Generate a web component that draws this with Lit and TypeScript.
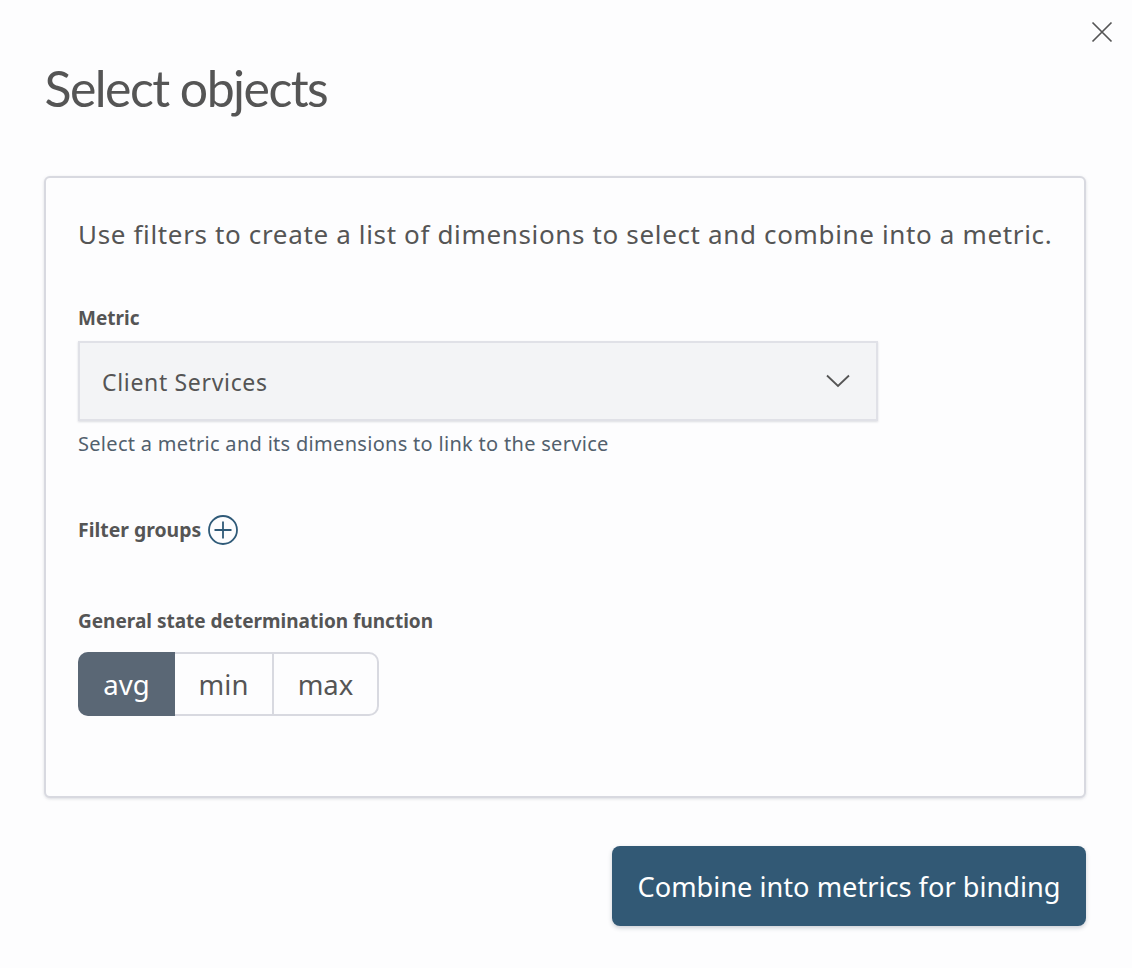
import { LitElement, html, css } from "lit";
import { customElement } from "lit/decorators.js";

@customElement("app-root")
export class AppRoot extends LitElement {
  static styles = css`
    :host {
      display: block;
      width: 1132px;
      height: 968px;
      background: #fdfdfe;
      font-family: "Noto Sans", "Open Sans", sans-serif;
      color: #555;
      overflow: hidden;
    }
    .dialog {
      position: relative;
      box-sizing: border-box;
      height: 968px;
      padding: 56px 46px 0 44px;
      display: flex;
      flex-direction: column;
    }
    .close {
      position: absolute;
      left: 1091px;
      top: 21px;
      width: 22px;
      height: 22px;
    }
    h1 {
      margin: 0 0 0 0.5px;
      font-family: "Lato", sans-serif;
      font-weight: 400;
      font-size: 50px;
      line-height: 64px;
      letter-spacing: -1.55px;
      color: #555;
      height: 120px;
    }
    .card {
      box-sizing: border-box;
      height: 622px;
      border: 2px solid #d8d9e0;
      border-radius: 6px;
      padding: 35px 32px 0;
      background: #fdfdfe;
      box-shadow: 0 1px 3px rgba(120, 125, 140, 0.25);
      display: flex;
      flex-direction: column;
      align-items: flex-start;
    }
    .intro {
      font-size: 26px;
      line-height: 42px;
      letter-spacing: 0.65px;
      white-space: nowrap;
    }
    .label {
      font-weight: 700;
      font-size: 19px;
      line-height: 28px;
      color: #555;
      white-space: nowrap;
    }
    .metric-label {
      margin-top: 49px;
    }
    .select {
      margin-top: 9px;
      box-sizing: border-box;
      width: 800px;
      height: 80px;
      border: 2px solid #e0e1e7;
      background: #f3f4f6;
      box-shadow: 0 1px 2px rgba(120, 125, 140, 0.25);
      padding: 1px 26px 0 22px;
      display: flex;
      align-items: center;
      justify-content: space-between;
      font-size: 23px;
      letter-spacing: 0.67px;
      color: #555;
    }
    .chevron {
      margin-top: -2px;
    }
    .hint {
      margin-top: 8px;
      font-size: 20px;
      line-height: 30px;
      letter-spacing: 0.3px;
      color: #52606d;
      white-space: nowrap;
    }
    .filters {
      margin-top: 55px;
      display: flex;
      align-items: center;
      gap: 7px;
      height: 32px;
    }
    .filters .label {
      font-size: 19.4px;
    }
    .func-label {
      margin-top: 61px;
    }
    .segments {
      margin-top: 17px;
      display: flex;
      height: 64px;
      box-sizing: border-box;
      border: 2px solid #d8d9e0;
      border-radius: 10px;
      font-size: 27.5px;
    }
    .seg {
      display: flex;
      align-items: center;
      justify-content: center;
      box-sizing: border-box;
    }
    .seg.on {
      background: #5a6775;
      color: #fff;
      width: 97px;
      margin: -2px 0 -2px -2px;
      border-radius: 10px 0 0 10px;
    }
    .seg.mid {
      width: 99px;
      border-right: 2px solid #d8d9e0;
    }
    .seg.last {
      width: 103px;
    }
    .footer {
      margin-top: 48px;
      display: flex;
      justify-content: flex-end;
    }
    button {
      box-sizing: border-box;
      width: 474px;
      height: 80px;
      border: none;
      border-radius: 8px;
      background: #325975;
      color: #fff;
      font-family: "Noto Sans", sans-serif;
      font-size: 27.2px;
      box-shadow: 0 2px 4px rgba(60, 70, 90, 0.25);
    }
    svg { display: block; }
  `;

  render() {
    return html`
      <div class="dialog">
        <svg class="close" viewBox="0 0 22 22" fill="none" stroke="#555" stroke-width="1.7">
          <path d="M1.5 1.5 L20.5 20.5 M20.5 1.5 L1.5 20.5" />
        </svg>
        <h1>Select objects</h1>
        <section class="card">
          <div class="intro">Use filters to create a list of dimensions to select and combine into a metric.</div>
          <div class="label metric-label">Metric</div>
          <div class="select">
            <span>Client Services</span>
            <svg class="chevron" width="24" height="14" viewBox="0 0 24 14" fill="none" stroke="#555" stroke-width="1.8">
              <path d="M1 1.5 L12 12 L23 1.5" />
            </svg>
          </div>
          <div class="hint">Select a metric and its dimensions to link to the service</div>
          <div class="filters">
            <span class="label">Filter groups</span>
            <svg width="30" height="30" viewBox="0 0 30 30" fill="none" stroke="#2f5a78" stroke-width="1.8">
              <circle cx="15" cy="15" r="14" />
              <path d="M15 6.5 V23.5 M6.5 15 H23.5" />
            </svg>
          </div>
          <div class="label func-label">General state determination function</div>
          <div class="segments">
            <div class="seg on">avg</div>
            <div class="seg mid">min</div>
            <div class="seg last">max</div>
          </div>
        </section>
        <div class="footer"><button>Combine into metrics for binding</button></div>
      </div>
    `;
  }
}
